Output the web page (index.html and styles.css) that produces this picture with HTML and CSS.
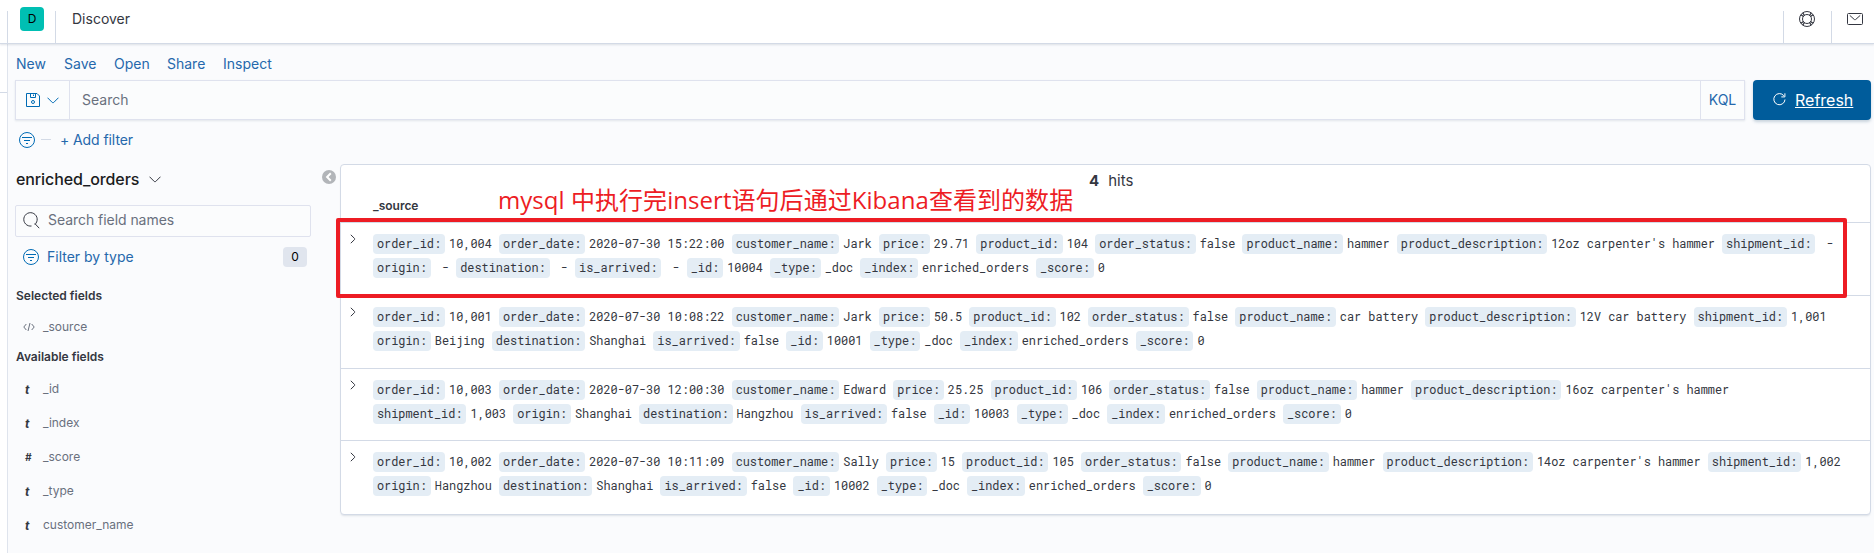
FILE: index.html
```html
<!DOCTYPE html>
<html lang="en">
<head>
<meta charset="utf-8">
<title>Discover</title>
<link rel="stylesheet" href="styles.css">
</head>
<body>
<header class="topbar">
  <div class="space"><span class="avatar">D</span></div>
  <div class="crumb">Discover</div>
  <div class="head-btn"><svg width="16" height="16" viewBox="0 0 16 16" class="ico dark"><circle cx="8" cy="8" r="7.5"/><circle cx="8" cy="8" r="4.5"/><path stroke-width="1.3" d="M3.700 1.900l1.800 2.600M1.900 3.700l2.600 1.800M12.300 1.900l-1.800 2.600M14.100 3.700l-2.600 1.800M3.700 14.100l1.800-2.600M1.900 12.300l2.600-1.800M12.300 14.100l-1.800-2.600M14.100 12.300l-2.600-1.800"/></svg></div>
  <div class="head-btn"><svg width="16" height="16" viewBox="0 0 16 16" class="ico dark"><rect x=".5" y="2.500" width="15" height="11" rx="1"/><path d="M2.800 4.400l4.300 3.900c.5.5 1.300.5 1.800 0l4.300-3.900"/></svg></div>
</header>
<div class="shell">
  <aside class="rail"><div class="rail-line"></div></aside>
  <main class="app">
    <nav class="menu"><a class="m1">New</a><a class="m2">Save</a><a class="m3">Open</a><a class="m4">Share</a><a class="m5">Inspect</a></nav>
    <div class="query">
      <div class="searchbox">
        <div class="saved">
          <svg width="14" height="14" viewBox="0 0 14 14" class="ico blue"><path d="M.5.500h10.500l2.500 2.500v10.500H.5zM4.500.500v4h5v-4M7.500 1.500v1.500"/><circle cx="7" cy="9" r="1.500"/></svg>
          <svg width="12" height="7" viewBox="0 0 12 7" class="ico blue"><path d="M.5.700L5.300 5.500q.700.700 1.400 0L11.500.700"/></svg>
        </div>
        <div class="search-text">Search</div>
        <div class="kql">KQL</div>
      </div>
      <div class="refresh">
        <svg width="13" height="13" viewBox="0 0 13 13" class="ico white"><path d="M10.800 2.700A5.600 5.600 0 1 0 12 6.500M11.900.300v3.600H8.300"/></svg>
        <span>Refresh</span>
      </div>
    </div>
    <div class="filters">
      <svg width="16" height="16" viewBox="0 0 16 16" class="ico blue"><circle cx="8" cy="8" r="7.500"/><path d="M3 5.500h10M5 8.500h6M7 11.500h2"/></svg>
      <i class="dash"></i><a class="add">+ Add filter</a>
    </div>
    <div class="body">
      <section class="side">
        <div class="pattern"><span>enriched_orders</span><svg width="12" height="7" viewBox="0 0 12 7" class="ico dark"><path d="M.5.700L5.300 5.500q.700.700 1.400 0L11.500.700"/></svg></div>
        <div class="field-search"><svg width="17" height="17" viewBox="0 0 17 17" class="ico dark"><path d="M8.500 14A6.700 6.700 0 1 1 11.800 12.500M11.800 11.500l4.400 4.700"/></svg><span>Search field names</span></div>
        <div class="by-type"><svg width="16" height="16" viewBox="0 0 16 16" class="ico blue"><circle cx="8" cy="8" r="7.500"/><path d="M3 5.500h10M5 8.500h6M7 11.500h2"/></svg><span>Filter by type</span><b>0</b></div>
        <h3 class="selected">Selected fields</h3>
        <div class="field source"><svg width="12" height="10" viewBox="0 0 12 10" class="ico grey"><path d="M3.300 2L.800 5l2.500 3M8.700 2l2.500 3-2.500 3M7 1L5 9"/></svg><span>_source</span></div>
        <h3 class="available">Available fields</h3>
        <div class="field"><i>t</i><span>_id</span></div>
        <div class="field"><i>t</i><span>_index</span></div>
        <div class="field"><i class="num">#</i><span>_score</span></div>
        <div class="field"><i>t</i><span>_type</span></div>
        <div class="field"><i>t</i><span>customer_name</span></div>
      </section>
      <div class="gutter"><svg width="14" height="14" viewBox="0 0 14 14"><circle cx="7" cy="7" r="7" fill="#b2b5b9"/><path d="M8.800 3.300L5.100 7l3.700 3.700" fill="none" stroke="#fff" stroke-width="2"/></svg></div>
      <section class="card">
        <div class="card-head"><div class="hits"><b>4</b><span>hits</span></div><div class="col">_source</div></div>
        <div class="row"><svg width="6" height="10" viewBox="0 0 6 10" class="ico dark"><path d="M.8.800l3.800 3.700q.5.500 0 1L.8 9.200"/></svg>
          <dl><dt>order_id:</dt><dd>10,004</dd> <dt>order_date:</dt><dd>2020-07-30 15:22:00</dd> <dt>customer_name:</dt><dd>Jark</dd> <dt>price:</dt><dd>29.71</dd> <dt>product_id:</dt><dd>104</dd> <dt>order_status:</dt><dd>false</dd> <dt>product_name:</dt><dd>hammer</dd> <dt>product_description:</dt><dd>12oz carpenter's hammer</dd> <dt>shipment_id:</dt><dd>&nbsp;-</dd><br>
          <dt>origin:</dt><dd>&nbsp;-</dd> <dt>destination:</dt><dd>&nbsp;-</dd> <dt>is_arrived:</dt><dd>&nbsp;-</dd> <dt>_id:</dt><dd>10004</dd> <dt>_type:</dt><dd>_doc</dd> <dt>_index:</dt><dd>enriched_orders</dd> <dt>_score:</dt><dd>0</dd></dl></div>
        <div class="row"><svg width="6" height="10" viewBox="0 0 6 10" class="ico dark"><path d="M.8.800l3.800 3.700q.5.500 0 1L.8 9.200"/></svg>
          <dl><dt>order_id:</dt><dd>10,001</dd> <dt>order_date:</dt><dd>2020-07-30 10:08:22</dd> <dt>customer_name:</dt><dd>Jark</dd> <dt>price:</dt><dd>50.5</dd> <dt>product_id:</dt><dd>102</dd> <dt>order_status:</dt><dd>false</dd> <dt>product_name:</dt><dd>car battery</dd> <dt>product_description:</dt><dd>12V car battery</dd> <dt>shipment_id:</dt><dd>1,001</dd><br>
          <dt>origin:</dt><dd>Beijing</dd> <dt>destination:</dt><dd>Shanghai</dd> <dt>is_arrived:</dt><dd>false</dd> <dt>_id:</dt><dd>10001</dd> <dt>_type:</dt><dd>_doc</dd> <dt>_index:</dt><dd>enriched_orders</dd> <dt>_score:</dt><dd>0</dd></dl></div>
        <div class="row short"><svg width="6" height="10" viewBox="0 0 6 10" class="ico dark"><path d="M.8.800l3.800 3.700q.5.500 0 1L.8 9.200"/></svg>
          <dl><dt>order_id:</dt><dd>10,003</dd> <dt>order_date:</dt><dd>2020-07-30 12:00:30</dd> <dt>customer_name:</dt><dd>Edward</dd> <dt>price:</dt><dd>25.25</dd> <dt>product_id:</dt><dd>106</dd> <dt>order_status:</dt><dd>false</dd> <dt>product_name:</dt><dd>hammer</dd> <dt>product_description:</dt><dd>16oz carpenter's hammer</dd><br>
          <dt>shipment_id:</dt><dd>1,003</dd> <dt>origin:</dt><dd>Shanghai</dd> <dt>destination:</dt><dd>Hangzhou</dd> <dt>is_arrived:</dt><dd>false</dd> <dt>_id:</dt><dd>10003</dd> <dt>_type:</dt><dd>_doc</dd> <dt>_index:</dt><dd>enriched_orders</dd> <dt>_score:</dt><dd>0</dd></dl></div>
        <div class="row"><svg width="6" height="10" viewBox="0 0 6 10" class="ico dark"><path d="M.8.800l3.800 3.700q.5.500 0 1L.8 9.200"/></svg>
          <dl><dt>order_id:</dt><dd>10,002</dd> <dt>order_date:</dt><dd>2020-07-30 10:11:09</dd> <dt>customer_name:</dt><dd>Sally</dd> <dt>price:</dt><dd>15</dd> <dt>product_id:</dt><dd>105</dd> <dt>order_status:</dt><dd>false</dd> <dt>product_name:</dt><dd>hammer</dd> <dt>product_description:</dt><dd>14oz carpenter's hammer</dd> <dt>shipment_id:</dt><dd>1,002</dd><br>
          <dt>origin:</dt><dd>Hangzhou</dd> <dt>destination:</dt><dd>Shanghai</dd> <dt>is_arrived:</dt><dd>false</dd> <dt>_id:</dt><dd>10002</dd> <dt>_type:</dt><dd>_doc</dd> <dt>_index:</dt><dd>enriched_orders</dd> <dt>_score:</dt><dd>0</dd></dl></div>
      </section>
    </div>
  </main>
</div>
<div class="note">mysql 中执行完insert语句后通过Kibana查看到的数据</div>
<div class="note-box"></div>
</body>
</html>
```
FILE: styles.css
```css
* { box-sizing: border-box; }
body {
  margin: 0; width: 1874px; height: 553px; overflow: hidden; position: relative;
  background: #fff; color: #343741; font: 14px/20px Inter, "Liberation Sans", sans-serif;
}
.ico { fill: none; stroke-width: 1; flex: none; display: block; }
.dark { stroke: #343741; }
.blue { stroke: #006bb4; }
.white { stroke: #fff; }
.grey { stroke: #69707d; }
.topbar { height: 44px; display: flex; align-items: flex-end; border-bottom: 1px solid #d3dae6; padding-left: 7px; position: relative; box-shadow: 0 1px 2px rgba(152,162,179,.3); }
.space { width: 49px; height: 32px; border: solid #d3dae6; border-width: 0 1px; padding-left: 12px; }
.avatar { display: block; width: 24px; height: 24px; margin-top: -4px; border-radius: 4px; background: #00bfb3; color: #000; font-size: 12px; line-height: 24px; text-align: center; }
.crumb { flex: 1; height: 32px; padding: 0 0 0 16px; line-height: 16px; }
.head-btn { width: 48px; height: 32px; border-left: 1px solid #d3dae6; padding-left: 15px; }
.head-btn:last-child { width: 43px; }
.shell { display: flex; height: 509px; }
.rail { width: 7px; padding-top: 48px; }
.rail-line { height: 1px; background: #d3dae6; }
.app { flex: 1; background: #fafbfd; border-left: 1px solid #dfe4ed; padding-left: 7px; }
.menu { height: 36px; padding-top: 10px; display: flex; color: #2568ac; padding-left: 1px; }
.menu a { white-space: nowrap; }
.m1 { width: 48px; } .m2 { width: 50px; } .m3 { width: 53px; } .m4 { width: 56px; }
.query { display: flex; height: 40px; }
.searchbox { width: 1730px; display: flex; border: 1px solid #dfe2ee; background: #fbfcfd; box-shadow: 0 1px 2px rgba(152,162,179,.25); }
.saved { width: 54px; border-right: 1px solid #dfe2ee; display: flex; align-items: center; gap: 7px; padding-left: 10px; }
.search-text { flex: 1; line-height: 38px; padding-left: 12px; color: #69707d; }
.kql { width: 44px; border-left: 1px solid #dfe2ee; text-align: center; line-height: 38px; color: #2568ac; }
.refresh { width: 118px; margin-left: 8px; border-radius: 4px; background: #005c9b; color: #fff; display: flex; align-items: center; padding: 0 0 1px 20px; gap: 9px; font-size: 16px; box-shadow: 0 2px 3px rgba(54,97,126,.25); }
.refresh span { text-decoration: underline; }
.filters { height: 44px; display: flex; align-items: flex-start; padding: 12px 0 0 4px; }
.dash { width: 10px; height: 1px; background: #d3dae6; margin: 7px 9px 0 6px; }
.add { color: #2568ac; line-height: 16px; letter-spacing: -.08px; }
.body { display: flex; }
.side { width: 296px; }
.pattern { height: 41px; display: flex; align-items: center; padding: 0 0 11px 1px; font-size: 16px; font-weight: 500; color: #1a1c21; gap: 10px; letter-spacing: -.1px; }
.field-search { width: 296px; height: 32px; border: 1px solid #dfe2ee; border-radius: 2px; display: flex; align-items: center; gap: 8px; padding: 0 0 2px 7px; color: #69707d; background: #fbfcfd; letter-spacing: -.05px; }
.by-type { height: 41px; display: flex; align-items: center; gap: 8px; padding: 0 4px 1px 8px; color: #2568ac; }
.by-type b { margin-left: auto; width: 24px; height: 20px; border-radius: 4px; background: #e0e5ee; color: #000; font: 12px/20px Inter, sans-serif; text-align: center; }
h3 { margin: 0; font-size: 12px; line-height: 18px; font-weight: 600; padding-left: 1px; }
.selected { padding-top: 9px; }
.available { padding-top: 4px; height: 28px; }
.field { height: 34px; display: flex; align-items: center; font-size: 12px; color: #69707d; }
.field i { width: 28px; padding-left: 10px; font: italic bold 12px Inter, sans-serif; color: #343741; }
.field .num { font-size: 10px; }
.source { height: 35px; margin-top: 4px; padding-left: 8px; gap: 8px; }
.gutter { width: 29px; padding: 5px 0 0 11px; }
.card { width: 1531px; height: 351px; background: #fff; border: 1px solid #d3dae6; border-radius: 4px; box-shadow: 0 2px 2px -1px rgba(152,162,179,.3); }
.card-head { height: 57px; }
.hits { height: 30px; padding: 6px 0 0 748px; display: flex; gap: 9px; font-size: 15px; }
.col { padding-left: 32px; line-height: 22px; font-size: 12px; font-weight: 600; }
.row { height: 73px; border-top: 1px solid #d3dae6; display: flex; align-items: flex-start; padding: 11px 0 0 9px; }
.row.short { height: 72px; }
dl { margin: -2px 0 0 17px; white-space: nowrap; font: 11.9px/24px "Roboto Mono", "Liberation Mono", monospace; letter-spacing: -.017px; color: #343741; }
dt, dd { display: inline; margin: 0; }
dt { display: inline-block; height: 20px; line-height: 20px; padding: 0 4px; margin-right: 4px; background: #e4edf5; border-radius: 4px; }
.note { position: absolute; left: 498px; top: 184px; font: 24px/32px "Open Sans", "Noto Sans CJK SC", sans-serif; letter-spacing: .05px; color: #ed1c24; white-space: nowrap; }
.note-box { position: absolute; left: 336px; top: 218px; width: 1511px; height: 80px; border: 4px solid #ed1c24; border-radius: 2px; }
```
